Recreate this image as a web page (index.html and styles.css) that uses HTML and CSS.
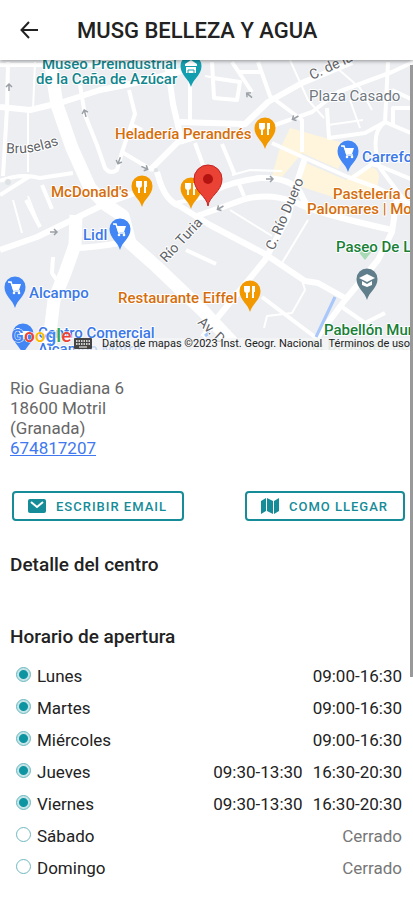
FILE: index.html
```html
<!DOCTYPE html>
<html lang="es">
<head>
    <meta charset="UTF-8">
    <meta name="viewport" content="width=device-width, initial-scale=1.0">
    <title>MUSG Belleza y Agua</title>
    <link rel="stylesheet" href="styles.css">
</head>
<body>
    <header class="toolbar">
        <button class="btn-back" type="button" aria-label="Volver">
            <svg viewBox="0 0 20 20" width="20" height="20"><path d="M10 2 2.500 10l7.500 8M3 10h16"/></svg>
        </button>
        <h1>MUSG BELLEZA Y AGUA</h1>
    </header>
    <main>
        <!-- Mapa -->
        <svg class="mapa" viewBox="0 60 413 290" preserveAspectRatio="xMidYMid slice" role="img" aria-label="Mapa del centro">
            <defs>
                <path id="pin" d="M0 17C-2 9-10.500 5-10.500-4a10.500 10.500 0 0 1 21 0C10.500 5 2 9 0 17z"/>
                <g id="tenedor"><path d="M-5-9v4q0 2 2 2t2-2v-4M-3-9V3M3-9V3M4-9v6" fill="none" stroke="#fff" stroke-width="2"/></g>
                <g id="carrito">
                    <path d="M-7-9h3l1 2h9l-2 6h-6l-2-7z" fill="#fff"/>
                    <path d="M-7-9h3l3 9h6" fill="none" stroke="#fff" stroke-width="1.500"/>
                    <circle cx="-1" cy="2" r="1.300" fill="#fff"/><circle cx="4" cy="2" r="1.300" fill="#fff"/>
                </g>
                <path id="flecha" d="M-4 0H3M0-3l3 3-3 3" fill="none" stroke="#9aa0a6" stroke-width="1.500"/>
                <path id="curva-bruselas" d="M6 153q26 2 52-8"/>
            </defs>
            <rect y="60" width="413" height="290" fill="#eceef1"/>
            <path d="M290 128l60 17-12 24-36-16-20 24-10-1 7-25z" fill="#fef5dc"/>
            <path d="M306 163l40 17q15-14 28-12 8 4 3 18l10 10-45 4-43-14z" fill="#fef5dc"/>

            <!-- Calles finas -->
            <g class="calle calle-fina">
                <path d="M35 62l-2 48M28 112v60M13 200l9 33M28 196l12 31M308 220l-26 43M230 210l42 26M302 280l3 10-13 23-25 3-3 12M232 175l18-5 32 1M290 60l18 40 16 18M350 100l10 28M328 125l35-5M227 80l-22-4M330 62l30 26 12 22"/>
            </g>
            <!-- Calles medianas -->
            <g class="calle">
                <path d="M0 65H110M8 62L7 108 3 176M80 85l5 30 12 30 8 23q5 7 12 2l5-18 13-38-6-24M122 152l30 18M190 80v43M130 124l12 6M0 181q20-8 40-3l33-5M0 195l30-19M26 200l14 27M42 185l10 24"/>
                <path d="M212 62l2 36 23 2 3-18-27-4M232 62l20 30M240 72h20M258 62l12 34 32 24v32M275 125l37-13 26-20 54-20 21-10M388 62l-3 60q-16 11-5 46l27 36M327 108l2 30 36-5 20-11 28 12M352 178l20-14 10 3 31 13M413 108h-20v16M222 144l13 31M392 90l21 10M195 143l8 22M239 184l5 12"/>
                <path d="M186 250l30 14M53 257l-1 16 6 9M262 297l53 40M342 307l23 16 20-10M175 203l30-6"/>
            </g>
            <!-- Calles principales -->
            <g class="calle calle-ancha">
                <path d="M0 107l30 3 33-8 37-12 40-8 45-12M167 62l6 42 7 30 5 9M150 170l28-28 24-7M157 172l3 10q7 20 20 24M143 190l-36 13-35 17-35 17-37 13M73 248q20 0 52-6M180 122l65 2 23-22 34-19 50-21M178 205l32 20 55 29 40 27 13 2 27 15M215 190q20-9 45-12 30-1 40 14l10 20M197 216l23-8 25-9q25-6 50 3 20 11 97 28M397 198l-5 34-14 28-33 40-30 40M305 158l-10 30-7 29-23 43-47 57-15 20"/>
            </g>
            <path class="calle" stroke-width="7" d="M272 143l33 15 43 19 30 11 35 17"/>
            <path class="calle calle-avenida" d="M76 215l-1 30-10 28-11 27-4 33v20"/>
            <path class="calle calle-avenida" d="M50 60l7 45 15 43 18 40 15 16 18 12 7 27 27 24 46 44 30 32"/>
            <circle cx="8" cy="182" r="3" fill="#dfe2e5"/>
            <circle cx="156" cy="170" r="2" fill="#dfe2e5"/>
            <path d="M335 297l-19 40M205 336l5-4" stroke="#a8c7fa" stroke-width="3"/>
            <path d="M357 250l8 10 8-10-5-4h-8z" fill="#a8dab5"/>
            <use href="#flecha" transform="translate(9 87) rotate(-90)"/>
            <use href="#flecha" transform="translate(85 113) rotate(-105)"/>
            <use href="#flecha" transform="translate(119 161) rotate(110)"/>
            <use href="#flecha" transform="translate(145 168) rotate(25)"/>
            <use href="#flecha" transform="translate(54 232)"/>
            <use href="#flecha" transform="translate(249 95) rotate(220)"/>
            <use href="#flecha" transform="translate(295 118) rotate(150)"/>
            <use href="#flecha" transform="translate(270 179)"/>
            <use href="#flecha" transform="translate(220 208) rotate(150)"/>

            <!-- Nombres de calles -->
            <g class="rotulo rotulo-calle">
                <text><textPath href="#curva-bruselas">Bruselas</textPath></text>
                <text transform="translate(312 80) rotate(-25)">C. de la</text>
                <text transform="translate(166 263) rotate(-47)">Río Turia</text>
                <text transform="translate(274 251) rotate(-67)">C. Río Duero</text>
                <text transform="translate(197 323) rotate(43)">Av. D</text>
            </g>
            <text class="rotulo rotulo-plaza" x="309" y="101">Plaza Casado</text>

            <!-- Lugares -->
            <g class="rotulo rotulo-museo">
                <text x="42" y="69">Museo Preindustrial</text>
                <text x="36" y="84">de la Caña de Azúcar</text>
            </g>
            <g class="rotulo rotulo-comida">
                <text x="115" y="139">Heladería Perandrés</text>
                <text x="51" y="197">McDonald's</text>
                <text x="333" y="199">Pastelería C</text>
                <text x="307" y="214">Palomares | Mo</text>
                <text x="118" y="303">Restaurante Eiffel</text>
            </g>
            <g class="rotulo rotulo-tienda">
                <text x="362" y="162">Carrefo</text>
                <text x="83" y="240">Lidl</text>
                <text x="29" y="298">Alcampo</text>
                <text x="38" y="338">Centro Comercial</text>
                <text x="38" y="354">Alcampo Motril</text>
            </g>
            <g class="rotulo rotulo-parque">
                <text x="336" y="252">Paseo De L</text>
                <text x="324" y="335">Pabellón Mun</text>
                <text x="307" y="351" opacity=".3">de Deportes de</text>
            </g>
            <g transform="translate(191 70)">
                <use href="#pin" fill="#129eaf"/>
                <path d="M-6-6l6-4 6 4v2H-6zM-5-3h10v6H-5z" fill="#fff"/><path d="M-3 0h6M-3 3V0M3 3V0" stroke="#129eaf"/>
            </g>
            <g transform="translate(265 132)"><use href="#pin" fill="#f29900"/><use href="#tenedor"/></g>
            <g transform="translate(142 190)"><use href="#pin" fill="#f29900"/><use href="#tenedor"/></g>
            <g transform="translate(191 192)"><use href="#pin" fill="#f29900"/><use href="#tenedor"/></g>
            <g transform="translate(250 295)"><use href="#pin" fill="#f29900"/><use href="#tenedor"/></g>
            <g transform="translate(348 155)"><use href="#pin" fill="#4285f4"/><use href="#carrito"/></g>
            <g transform="translate(120 233)"><use href="#pin" fill="#4285f4"/><use href="#carrito"/></g>
            <g transform="translate(15 291)"><use href="#pin" fill="#4285f4"/><use href="#carrito"/></g>
            <g transform="translate(23 338)"><use href="#pin" fill="#4285f4"/><use href="#carrito"/></g>
            <g transform="translate(367 283)">
                <use href="#pin" fill="#607d8b"/>
                <path d="M-8-5l8-4 8 4-8 4zM-5-2l5 3 5-3v4l-5 2-5-2z" fill="#fff"/>
            </g>
            <path d="M208 206c-1-10-14-14-14-27a14 14 0 0 1 28 0c0 13-13 17-14 27z" fill="#ea4335" stroke="#c5221f"/>
            <circle cx="208" cy="179" r="5" fill="#b31412"/>

            <!-- Créditos del mapa -->
            <rect x="74" y="338" width="339" height="12" fill="#f5f5f5" opacity=".75"/>
            <g>
                <rect x="74" y="338" width="18" height="11" rx="1" fill="#444"/>
                <path d="M76 341h14M76 344h14" stroke="#fff" stroke-width="1.500" stroke-dasharray="1.500 1"/><path d="M79 347h8" stroke="#fff"/>
            </g>
            <text class="google" x="11" y="342"><tspan fill="#4285f4">G</tspan><tspan fill="#ea4335">o</tspan><tspan fill="#fbbc04">o</tspan><tspan fill="#4285f4">g</tspan><tspan fill="#34a853">l</tspan><tspan fill="#ea4335">e</tspan></text>
            <text class="creditos" x="102" y="347">Datos de mapas ©2023 Inst. Geogr. Nacional</text>
            <text class="creditos" x="410" y="347" text-anchor="end">Términos de uso</text>
        </svg>

        <section class="contenido">
            <address>
                Rio Guadiana 6<br>
                18600 Motril<br>
                (Granada)<br>
                <a href="tel:674817207">674817207</a>
            </address>
            <div class="acciones">
                <button class="btn" type="button">
                    <svg viewBox="0 0 18 14" width="18" height="14"><rect width="18" height="14" rx="2"/><path d="M3 3l6 5 6-5" class="trazo"/></svg>
                    ESCRIBIR EMAIL
                </button>
                <button class="btn" type="button">
                    <svg viewBox="0 0 18 16" width="18" height="16"><path d="M0 3l5-3v13l-5 3zM6 0l6 3v13l-6-3zM13 3l5-3v13l-5 3z"/></svg>
                    COMO LLEGAR
                </button>
            </div>
            <h2>Detalle del centro</h2>
            <h2 class="titulo-horario">Horario de apertura</h2>
            <table class="horario">
                <tbody>
                    <tr>
                        <th scope="row"><input type="radio" id="lunes" checked><label for="lunes">Lunes</label></th>
                        <td><span>09:00-16:30</span></td>
                    </tr>
                    <tr>
                        <th scope="row"><input type="radio" id="martes" checked><label for="martes">Martes</label></th>
                        <td><span>09:00-16:30</span></td>
                    </tr>
                    <tr>
                        <th scope="row"><input type="radio" id="miercoles" checked><label for="miercoles">Miércoles</label></th>
                        <td><span>09:00-16:30</span></td>
                    </tr>
                    <tr>
                        <th scope="row"><input type="radio" id="jueves" checked><label for="jueves">Jueves</label></th>
                        <td><span>09:30-13:30</span><span>16:30-20:30</span></td>
                    </tr>
                    <tr>
                        <th scope="row"><input type="radio" id="viernes" checked><label for="viernes">Viernes</label></th>
                        <td><span>09:30-13:30</span><span>16:30-20:30</span></td>
                    </tr>
                    <tr>
                        <th scope="row"><input type="radio" id="sabado"><label for="sabado">Sábado</label></th>
                        <td class="cerrado"><span>Cerrado</span></td>
                    </tr>
                    <tr>
                        <th scope="row"><input type="radio" id="domingo"><label for="domingo">Domingo</label></th>
                        <td class="cerrado"><span>Cerrado</span></td>
                    </tr>
                </tbody>
            </table>
        </section>
        <div class="barra-scroll"></div>
    </main>
</body>
</html>
```
FILE: styles.css
```css
* {
    box-sizing: border-box;
}

body {
    margin: 0;
    font-family: Roboto, "Liberation Sans", sans-serif;
    font-size: 17px;
    color: #222;
    background-color: #fff;
}

/* Cabecera */
.toolbar {
    position: relative;
    z-index: 1;
    display: flex;
    align-items: center;
    gap: 38px;
    height: 60px;
    padding: 0 19px;
    background-color: #fff;
    box-shadow: 0 1px 4px rgba(0, 0, 0, 0.4);
}

.toolbar h1 {
    margin: 0;
    font-size: 22px;
    font-weight: 500;
    color: #222;
}

.btn-back {
    display: flex;
    padding: 0;
    border: none;
    background: none;
    cursor: pointer;
}

.btn-back path {
    fill: none;
    stroke: #222;
    stroke-width: 2;
}

main {
    position: relative;
}

/* Mapa */
.mapa {
    display: block;
    width: 100%;
    height: 290px;
}

.calle {
    fill: none;
    stroke: #fff;
    stroke-width: 4;
    stroke-linejoin: round;
}

.calle-fina {
    stroke-width: 2;
}

.calle-ancha {
    stroke-width: 6;
}

.calle-avenida {
    stroke-width: 13;
}

.rotulo {
    font-size: 15px;
    font-weight: 500;
    stroke: #fff;
    stroke-width: 2px;
    stroke-linejoin: round;
    paint-order: stroke;
}

.rotulo-calle {
    font-size: 14px;
    font-weight: 400;
    fill: #5f6368;
}

.rotulo-plaza {
    font-weight: 400;
    fill: #70787f;
}

.rotulo-museo {
    fill: #12858d;
}

.rotulo-comida {
    fill: #d56e0c;
}

.rotulo-tienda {
    fill: #3b78e7;
}

.rotulo-parque {
    fill: #188038;
}

.google {
    font-size: 19px;
    font-weight: 500;
    stroke: #fff;
    stroke-width: 1px;
    paint-order: stroke;
}

.creditos {
    font-size: 11px;
    fill: #222;
}

/* Datos del centro */
.contenido {
    padding: 28px 8px 16px 10px;
}

address {
    font-style: normal;
    line-height: 20px;
    color: #666;
}

address a {
    color: #3f78f0;
}

.acciones {
    display: flex;
    justify-content: space-between;
    margin: 33px 0 32px 2px;
}

.btn {
    display: flex;
    align-items: center;
    gap: 10px;
    height: 30px;
    padding: 0 15px 0 14px;
    border: 2px solid #168c98;
    border-radius: 4px;
    background-color: #fff;
    color: #168c98;
    font-family: inherit;
    font-size: 13px;
    font-weight: 500;
    letter-spacing: 1px;
    cursor: pointer;
}

.btn svg {
    fill: #168c98;
}

.btn .trazo {
    fill: none;
    stroke: #fff;
    stroke-width: 2;
}

h2 {
    margin: 0;
    font-size: 19px;
    font-weight: 500;
    line-height: 24px;
    color: #222;
}

.titulo-horario {
    margin-top: 48px;
}

/* Horario */
.horario {
    width: 100%;
    margin-top: 11px;
    border-collapse: collapse;
}

.horario th,
.horario td {
    height: 32px;
    padding: 0;
    font-weight: 400;
}

.horario th {
    padding-left: 6px;
    text-align: left;
}

.horario td {
    padding-right: 3px;
    text-align: right;
}

.horario td span + span {
    margin-left: 10px;
}

.horario input {
    appearance: none;
    width: 15px;
    height: 15px;
    margin: 0 6px 0 0;
    border: 1px solid #6db8c0;
    border-radius: 50%;
    vertical-align: baseline;
}

.horario input:checked {
    background: radial-gradient(circle, #0f95a1 4px, #c5e5e8 5px);
}

.horario .cerrado {
    color: #777;
}

/* Barra de desplazamiento sobre el contenido */
.barra-scroll {
    position: absolute;
    top: 5px;
    right: 0;
    width: 3px;
    height: 612px;
    background-color: #999;
}
```
